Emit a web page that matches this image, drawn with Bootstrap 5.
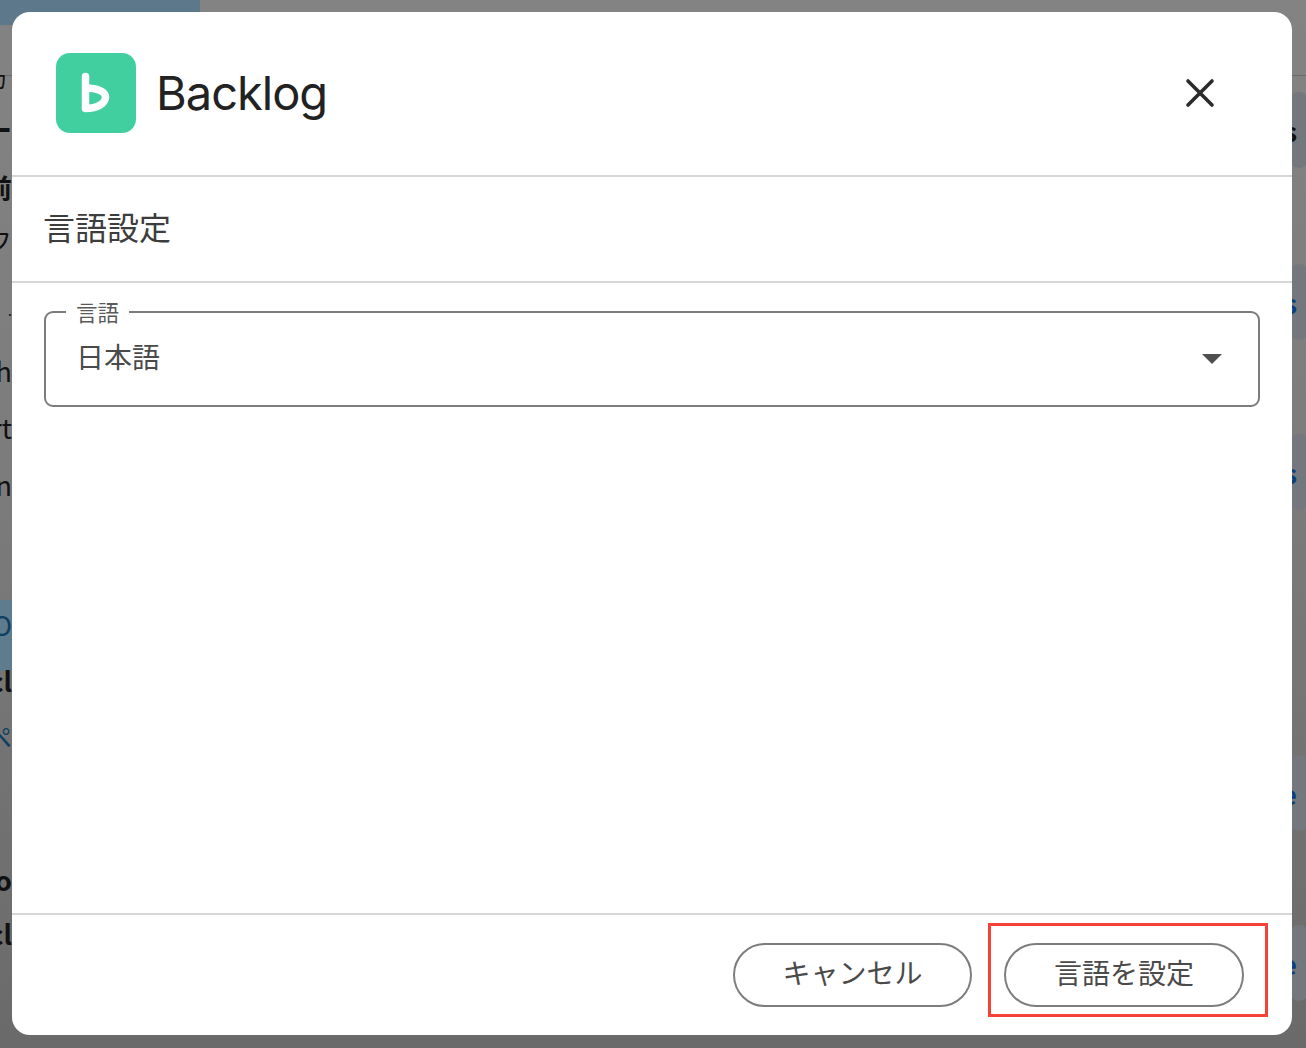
<!doctype html>
<html lang="ja">
<head>
<meta charset="utf-8">
<title>Backlog 言語設定</title>
<link rel="stylesheet" href="https://cdn.jsdelivr.net/npm/bootstrap@5.3.0/dist/css/bootstrap.min.css">
<style>
html,body{height:100%;margin:0;overflow:hidden}
body{font-family:"Noto Sans CJK JP","Liberation Sans",sans-serif;background:linear-gradient(180deg,#838383 0,#7c7c7c 45%,#6a6a6a 100%);color:#111}
.page-behind{height:1048px;position:relative}
.top-tint{height:25px;width:200px;background:#5d788a}
.rule-behind{height:1px;background:#6a6a6a;margin-top:50px}
.strip-left{width:12px;height:100%;overflow:hidden;padding-top:68px}
.strip-right{width:14px;height:100%;overflow:hidden}
.strip-left div{height:56px;line-height:20px;font-size:27px;white-space:nowrap;direction:rtl;width:12px}
.strip-left div:nth-child(1){height:52px;font-size:22px;padding-right:4px}
.strip-left div:nth-child(2){height:58px;font-weight:700}
.strip-left div:nth-child(3){height:52px;font-weight:700}
.strip-left div:nth-child(4){height:70px;font-size:25px}
.strip-left div:nth-child(5){height:61px;font-size:14px}
.strip-left div:nth-child(6){height:57px}
.strip-left div:nth-child(7){height:57px}
.strip-left div:nth-child(8){height:140px}
.strip-left div:nth-child(9){height:71px;color:#0d3f63;background:#5f7b8e;margin-top:-15px;padding-top:15px}
.strip-left div:nth-child(10){height:56px;font-weight:700}
.strip-left div:nth-child(11){height:143px;color:#0d3f63}
.strip-left div:nth-child(12){height:54px;font-weight:700}
.strip-left div:nth-child(13){font-weight:700}
.behind-columns{position:absolute;top:0;left:0;right:0;bottom:0}
.strip-right .blob{width:40px;height:76px;border-radius:50%;background:#74777e;display:flex;align-items:center;font-size:27px;line-height:1;color:#0b3f85;font-weight:700;margin-left:-13px}
.strip-right .blob span{width:18px;text-align:right;display:block}
.blob-a{margin-top:92px;color:#111!important}
.blob-b{margin-top:96px}
.blob-c{margin-top:94px}
.blob-d{margin-top:245px}
.blob-e{margin-top:94px}
.sheet{position:absolute;left:12px;top:12px;width:1280px;height:1023px;border-radius:18px;background:#fff;border:0;overflow:hidden;color:#444}
.sheet-head{height:165px;padding:41px 73px 0 44px;border-bottom:2px solid #d6d6d6;border-radius:0}
.app-mark{width:80px;height:80px;flex:none;display:block}
.app-name{font-family:Inter,"Liberation Sans",sans-serif;font-size:47px;line-height:80px;letter-spacing:-1px;color:#222;margin-left:20px;font-weight:400}
.shut{width:38px;height:38px;background:none;border:0;padding:0;line-height:0;margin-top:21px}
.sheet-title{height:106px;padding:0 31px 6px;border-bottom:2px solid #d6d6d6;font-size:32px;font-weight:400;line-height:1;margin:0;color:#3d3d3d}
.sheet-body{padding:28px 32px 0}
.field-box{position:relative;height:96px;border:2px solid #7c7c7c;border-radius:9px;padding:0 36px 6px 30px;font-size:28px;color:#4a4a4a}
.field-tag{position:absolute;left:20px;top:-14px;background:#fff;padding:0 10px;font-size:21.5px;line-height:26px;color:#5a5a5a}
.field-mark{margin-top:6px}
.sheet-foot{height:122px;border-top:2px solid #d6d6d6;padding:28px 48px 0 0;gap:32px;border-radius:0}
.pill{width:239px;height:64px;border:2px solid #7d7d7d;border-radius:32px;background:#fff;color:#4a4a4a;font-size:28px;line-height:1;padding:0 0 7px}
.pill-wrap{position:relative}
.pill-wrap .pill{width:240px}
.callout{position:absolute;left:-16px;right:-24px;top:-20px;bottom:-10px;border:3px solid #f44336;pointer-events:none}
</style>
</head>
<body>
<div class="page-behind">
  <div class="top-tint"></div>
  <div class="rule-behind"></div>
  <div class="behind-columns d-flex justify-content-between">
    <div class="strip-left">
      <div>カ</div><div>ー</div><div>前</div><div>フ</div><div>.</div><div>sh</div><div>rt</div><div>n</div><div>O</div><div>cl</div><div>ペ</div><div>o</div><div>cl</div>
    </div>
    <div class="strip-right">
      <div class="blob blob-a"><span>s</span></div>
      <div class="blob blob-b"><span>s</span></div>
      <div class="blob blob-c"><span>s</span></div>
      <div class="blob blob-d"><span>e</span></div>
      <div class="blob blob-e"><span>e</span></div>
    </div>
  </div>
</div>

<div class="modal-content sheet d-flex flex-column">
  <div class="modal-header sheet-head align-items-start justify-content-between">
    <div class="d-flex align-items-center">
      <svg class="app-mark" viewBox="0 0 80 80" aria-hidden="true">
        <rect width="80" height="80" rx="14" fill="#42cf9f"/>
        <path d="M29.5 23.5V55.5C42 55.5 49.5 50 49.5 44C49.5 38.5 41 35 29.5 35" fill="none" stroke="#fff" stroke-width="7.5" stroke-linecap="round" stroke-linejoin="round"/>
      </svg>
      <span class="app-name">Backlog</span>
    </div>
    <button class="shut" type="button" aria-label="閉じる">
      <svg width="38" height="38" viewBox="0 0 38 38" aria-hidden="true"><path d="M7 7L31 31M31 7L7 31" stroke="#2b2b2b" stroke-width="3.6" stroke-linecap="round"/></svg>
    </button>
  </div>
  <h2 class="modal-title sheet-title d-flex align-items-center">言語設定</h2>
  <div class="modal-body sheet-body flex-grow-1">
    <div class="field-box d-flex align-items-center justify-content-between">
      <span class="field-tag">言語</span>
      <span>日本語</span>
      <svg class="field-mark" width="20" height="10" viewBox="0 0 20 10" aria-hidden="true"><path d="M0 0H20L10 10Z" fill="#4f4f4f"/></svg>
    </div>
  </div>
  <div class="modal-footer sheet-foot d-flex justify-content-end align-items-start flex-nowrap">
    <button class="btn pill m-0" type="button">キャンセル</button>
    <div class="pill-wrap">
      <button class="btn pill m-0" type="button">言語を設定</button>
      <div class="callout"></div>
    </div>
  </div>
</div>
<script src="https://cdn.jsdelivr.net/npm/bootstrap@5.3.0/dist/js/bootstrap.bundle.min.js"></script>
</body>
</html>
